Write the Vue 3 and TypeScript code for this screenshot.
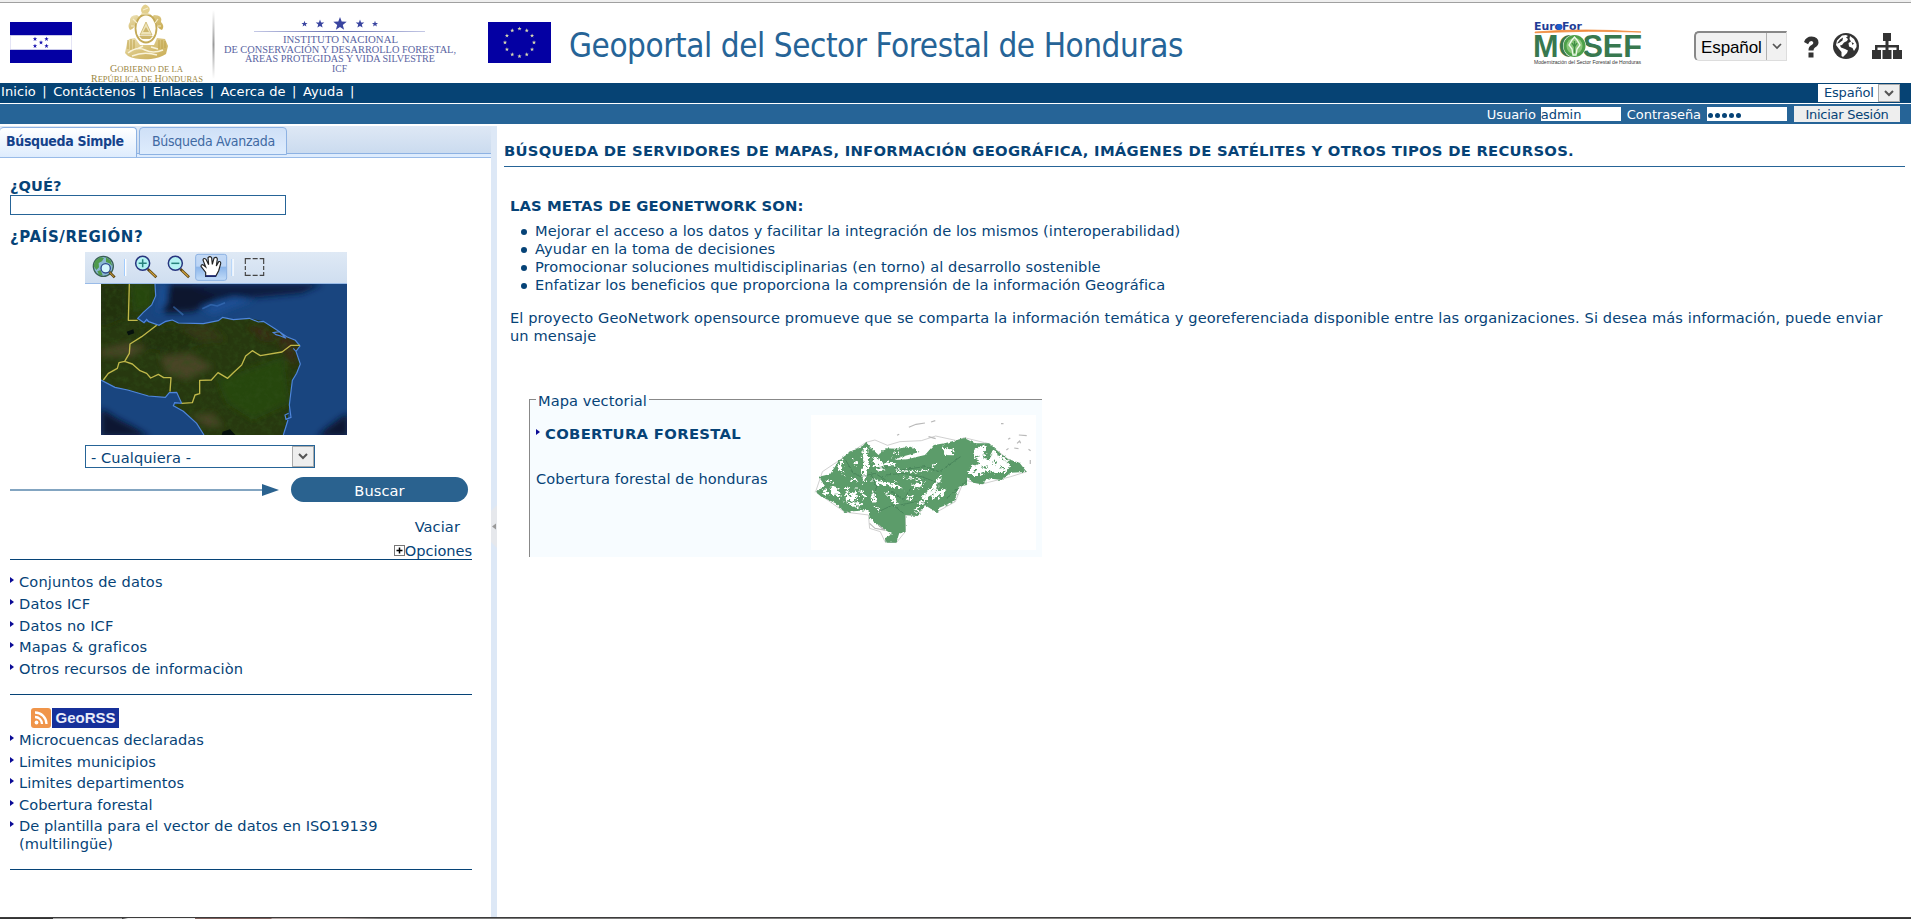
<script setup lang="ts">
const nav: string[] = ['Inicio', 'Contáctenos', 'Enlaces', 'Acerca de', 'Ayuda']
const categories: string[] = ['Conjuntos de datos', 'Datos ICF', 'Datos no ICF', 'Mapas & graficos', 'Otros recursos de informaciòn']
const feeds: string[] = [
  'Microcuencas declaradas',
  'Limites municipios',
  'Limites departimentos',
  'Cobertura forestal',
  'De plantilla para el vector de datos en ISO19139 (multilingüe)',
]
const goals: string[] = [
  'Mejorar el acceso a los datos y facilitar la integración de los mismos (interoperabilidad)',
  'Ayudar en la toma de decisiones',
  'Promocionar soluciones multidisciplinarias (en torno) al desarrollo sostenible',
  'Enfatizar los beneficios que proporciona la comprensión de la información Geográfica',
]

function star(cx: number, cy: number, r: number): string {
  const pts: string[] = []
  for (let i = 0; i < 10; i++) {
    const a = (Math.PI / 5) * i - Math.PI / 2
    const k = i % 2 ? r * 0.42 : r
    pts.push(`${(cx + k * Math.cos(a)).toFixed(1)},${(cy + k * Math.sin(a)).toFixed(1)}`)
  }
  return pts.join(' ')
}
const euStars: string[] = Array.from({ length: 12 }, (_, i) =>
  star(31.5 + 14.5 * Math.sin((i * Math.PI) / 6), 20.5 - 13.8 * Math.cos((i * Math.PI) / 6), 2.2),
)
const hnStars: string[] = [star(25, 17, 2.3), star(36.5, 17, 2.3), star(31, 20.5, 2.3), star(25, 24, 2.3), star(36.5, 24, 2.3)]
const icfStars: string[] = [star(304.5, 24, 3.2), star(320, 24, 4.5), star(340, 24, 7), star(360, 24, 4.5), star(375, 24, 3.2)]
</script>

<template>
  <div class="page">
    <header class="banner">
      <svg class="flag" width="62" height="41" viewBox="0 0 62 41">
        <rect width="62" height="41" fill="#0400a3" />
        <rect y="13" width="62" height="15" fill="#c9c9ea" />
        <rect x="0.5" y="14" width="61" height="13" fill="#fff" />
        <polygon v-for="(s, i) in hnStars" :key="i" :points="s" fill="#1a14b0" />
      </svg>
      <svg class="institute" width="400" height="83" viewBox="72 0 400 83">
        <defs>
          <linearGradient id="gold" x1="0" y1="0" x2="1" y2="1">
            <stop offset="0" stop-color="#eee3b8" />
            <stop offset="0.5" stop-color="#d8c27a" />
            <stop offset="1" stop-color="#c8ab52" />
          </linearGradient>
          <linearGradient id="rule" x1="0" y1="0" x2="0" y2="1">
            <stop offset="0" stop-color="#fff" />
            <stop offset="0.5" stop-color="#999" />
            <stop offset="1" stop-color="#fff" />
          </linearGradient>
          <linearGradient id="thin" x1="0" y1="0" x2="1" y2="0">
            <stop offset="0" stop-color="#c5c9e6" />
            <stop offset="0.5" stop-color="#5f69ac" />
            <stop offset="1" stop-color="#c5c9e6" />
          </linearGradient>
        </defs>
        <!-- coat of arms -->
        <g transform="translate(120 1)">
          <path d="M22 6 Q25 1 29 6 Q31 9 28 12 L30 15 H20 L22 12 Q20 9 22 6Z" fill="#e3d08e" />
          <path d="M17 14 Q9 14 10 21 Q7 25 10 29 Q15 27 15 23 L21 17Z M34 14 Q43 14 41 21 Q45 25 42 29 Q37 27 37 23 L31 17Z" fill="url(#gold)" />
          <path d="M9 38 L15 37 L20 44 L34 44 L37 37 L45 38 L48 45 L46 53 Q40 57 31 58 Q16 59 8 55 L5 52 L7 42Z" fill="url(#gold)" />
          <ellipse cx="26" cy="27.500" rx="10.500" ry="14" fill="#fffefa" stroke="#c4aa57" stroke-width="1.800" />
          <path d="M26 21 L32 34 H20Z" fill="#eee3b6" stroke="#c9b267" stroke-width="0.8" />
          <path d="M26 26 L29 31 H23Z M19 35 H33 L30 38 H22Z" fill="#cdb66c" />
          <path d="M8 39 V48 M11 38 V49 M14 39 V49 M39 39 V48 M42 39 V48 M45 40 V47" stroke="#bfa34b" stroke-width="1" />
          <path d="M8 52 Q17 45 25 49 T43 49 M12 55 Q24 50 37 54 M17 48 L23 45 M31 46 L38 48" fill="none" stroke="#f9f3da" stroke-width="1.500" />
          <path d="M13 18 L17 22 M38 18 L35 22 M11 25 H14 M38 25 H41 M23 9 L28 7 M21 13 H30" stroke="#f6eecb" stroke-width="1.200" />
        </g>
        <text class="gov" x="110" y="72" textLength="73" lengthAdjust="spacingAndGlyphs"><tspan class="cap">G</tspan>OBIERNO DE LA</text>
        <text class="gov" x="91" y="81.500" textLength="112" lengthAdjust="spacingAndGlyphs"><tspan class="cap">R</tspan>EPÚBLICA DE <tspan class="cap">H</tspan>ONDURAS</text>
        <rect x="212.500" y="10" width="2" height="69" fill="url(#rule)" />
        <polygon v-for="(s, i) in icfStars" :key="i" :points="s" fill="#3a45a0" />
        <rect x="254" y="31" width="171" height="1" fill="url(#thin)" />
        <text class="icf" x="283" y="43" textLength="115" lengthAdjust="spacingAndGlyphs">INSTITUTO NACIONAL</text>
        <text class="icf" x="224" y="52.500" textLength="232" lengthAdjust="spacingAndGlyphs">DE CONSERVACIÓN Y DESARROLLO FORESTAL,</text>
        <text class="icf" x="245" y="62" textLength="190" lengthAdjust="spacingAndGlyphs">ÁREAS PROTEGIDAS Y VIDA SILVESTRE</text>
        <text class="icf" x="332" y="71.500" textLength="15" lengthAdjust="spacingAndGlyphs">ICF</text>
      </svg>
      <svg class="eu" width="63" height="41" viewBox="0 0 63 41">
        <rect width="63" height="41" fill="#0400a3" />
        <polygon v-for="(s, i) in euStars" :key="i" :points="s" fill="#d9d9b0" />
      </svg>
      <h1>Geoportal del Sector Forestal de Honduras</h1>
      <div class="tools">
        <svg class="mosef" width="108" height="43" viewBox="0 0 108 43">
          <text x="0" y="8" class="euro" textLength="48" lengthAdjust="spacingAndGlyphs">EuroFor</text>
          <circle cx="25.500" cy="5" r="3" fill="#1c5fd0" />
          <path d="M1 10 Q50 6 107 10 Q55 8 1 10.800Z" fill="#f08a3c" stroke="#f08a3c" stroke-width="0.8" />
          <text x="-1" y="35" class="mo" textLength="109" lengthAdjust="spacingAndGlyphs">MOSEF</text>
          <circle cx="40.500" cy="24" r="11.500" fill="#fff" />
          <circle cx="40.500" cy="24" r="11" fill="#4ea04a" />
          <circle cx="40.500" cy="24" r="8" fill="#8cc77c" />
          <path d="M38 18 L40.500 15 L43 18 L46 23 L43 27 L42 33 H39 L38 27 L35 23Z" fill="none" stroke="#f0faee" stroke-width="1.300" />
          <path d="M40.500 19 V31 M38 21 L40.500 25 L43 21" stroke="#3f8f45" stroke-width="1.400" fill="none" />
          <text x="0" y="42" class="mini" textLength="107" lengthAdjust="spacingAndGlyphs">Modernización del Sector Forestal de Honduras</text>
        </svg>
        <div class="lang-big"><span>Español</span><i><svg width="10" height="7" viewBox="0 0 10 7"><path d="M1 1 L5 5 L9 1" fill="none" stroke="#555" stroke-width="1.700" /></svg></i></div>
        <svg class="question" width="16" height="22" viewBox="0 0 16 22"><path d="M1 6 Q3 0.500 8.500 0.500 Q15.500 1 15.500 6.500 Q15.500 9.500 12 11.500 Q10.500 12.500 10.500 14.500 H5.500 Q5.300 10.500 9 8.800 Q10.500 8 10.300 6.600 Q10 5 8.200 5 Q6.300 5 5.100 8.300Z M5.500 16.500 H10.500 V21.500 H5.500Z" fill="#333" /></svg>
        <svg class="globe" width="26" height="26" viewBox="0 0 26 26">
          <circle cx="13" cy="13" r="13" fill="#333" />
          <path d="M9 2.500 L13 2 L15 3 L13 4.500 L15 6 L14 8 L11 9.500 L9 12 L7 12.500 L8 14.500 L12 16 L15 17.500 L14 20 L12 22 L10 24 L8.500 23 L8.500 19 L6 16 L3 12 L4 7.500Z" fill="#fff" />
          <path d="M17 3 L21 6 L23.500 11 L23.500 14 L21 18 L19.500 15 L16 13.500 L15.500 10 L18 8.500 L16.500 6Z" fill="#fff" />
          <path d="M7 6.500 L10 4.500 L9.500 7.500 L6 10 L4 10.500Z M18.500 9 L21 10.500 L19.500 12Z" fill="#333" />
        </svg>
        <svg class="sitemap" width="30" height="26" viewBox="0 0 30 26"><path d="M11 0 H19 V8 H16.500 V12 H27 V17 H30 V26 H21 V17 H24.500 V14.500 H16.500 V17 H19.500 V26 H10.500 V17 H13.500 V14.500 H5.500 V17 H9 V26 H0 V17 H3 V12 H13.500 V8 H11Z" fill="#333" /></svg>
      </div>
    </header>

    <nav class="navbar">
      <div class="links"><template v-for="n in nav" :key="n"><a>{{ n }}</a><span class="sep">|</span></template></div>
      <div class="lang-small"><span>Español</span><i><svg width="10" height="7" viewBox="0 0 10 7"><path d="M1 1 L5 5 L9 1" fill="none" stroke="#555" stroke-width="2" /></svg></i></div>
    </nav>
    <div class="login">
      <span>Usuario</span><div class="field user">admin</div>
      <span>Contraseña</span><div class="field pass"><b v-for="n in 5" :key="n"></b></div>
      <button>Iniciar Sesión</button>
    </div>

    <div class="main">
      <aside>
        <div class="tabs">
          <div class="tab active">Búsqueda Simple</div>
          <div class="tab">Búsqueda Avanzada</div>
        </div>
        <div class="panel">
          <label class="what">¿QUÉ?</label>
          <div class="what-input"></div>
          <label class="where">¿PAÍS/REGIÓN?</label>
          <div class="mapbox">
            <svg class="toolbar" width="262" height="32" viewBox="255 276 786 96">
              <defs>
                <linearGradient id="bar" x1="0" y1="0" x2="0" y2="1"><stop offset="0" stop-color="#dfe9f5" /><stop offset="1" stop-color="#cfdef0" /></linearGradient>
                <linearGradient id="press" x1="0" y1="0" x2="0" y2="1"><stop offset="0" stop-color="#c3d9f5" /><stop offset="0.450" stop-color="#bcd5f5" /><stop offset="0.500" stop-color="#8db6ea" /><stop offset="1" stop-color="#c2dcf8" /></linearGradient>
              </defs>
              <rect x="255" y="276" width="786" height="93" fill="url(#bar)" />
              <rect x="255" y="369" width="786" height="3" fill="#99bbe8" />
              <circle cx="310" cy="319" r="30" fill="#8ab8d4" stroke="#3a5f55" stroke-width="4" />
              <path d="M285 303 L300 292 L312 294 L306 304 L296 309 L297 322 L289 330 L281 318Z M318 292 L332 302 L337 318 L328 310 L318 306Z M292 334 L302 330 L308 346 L297 345Z" fill="#4f9a4c" />
              <path d="M327 335 L344 352" stroke="#5c4514" stroke-width="8" /><path d="M328 336 L342 350" stroke="#d9a93c" stroke-width="3" />
              <circle cx="317" cy="325" r="14" fill="#d3f6fc" stroke="#2c4a8c" stroke-width="4" />
              <path d="M374 297 V348 M696 297 V348" stroke="#98c8ff" stroke-width="3" /><path d="M377 297 V348 M699 297 V348" stroke="#fff" stroke-width="4" />
              <g v-for="x in [428, 526]" :key="x">
                <path :d="`M${x + 15} 327 L${x + 41} 352`" stroke="#5c4514" stroke-width="8" /><path :d="`M${x + 20} 332 L${x + 39} 350`" stroke="#d9a93c" stroke-width="3.500" />
                <circle :cx="x" cy="310" r="21" fill="#b4f2f2" stroke="#27357f" stroke-width="4.500" />
                <path :d="x === 428 ? `M416 310 H440 M428 298 V322` : `M514 310 H538`" stroke="#26827c" stroke-width="4.500" />
              </g>
              <rect x="587" y="283" width="93" height="78" rx="7" fill="url(#press)" stroke="#8db2e3" stroke-width="3" />
              <path d="M617 349 V337 L603 319 Q604 311 611 316 L617 321 L609 300 Q611 292 618 298 L626 314 L624 293 Q631 286 635 294 L637 313 L642 294 Q650 289 652 297 L649 318 L656 305 Q663 303 662 311 L656 332 L647 349Z" fill="#fff" stroke="#222" stroke-width="3.500" />
              <path d="M617 348 H648" stroke="#1c2a78" stroke-width="5" />
              <path d="M736 312 V296 H752 M758 296 H773 M779 296 H791 V312 M791 318 V330 M791 336 V346 H779 M773 346 H758 M752 346 H736 V336 M736 330 V318" fill="none" stroke="#444" stroke-width="3.500" />
            </svg>
            <svg class="earth" width="246" height="151" viewBox="303 372 738 453" preserveAspectRatio="none">
              <defs>
                <filter id="soft"><feGaussianBlur stdDeviation="9" /></filter>
                <filter id="grain" x="0" y="0" width="1" height="1"><feTurbulence type="fractalNoise" baseFrequency="0.060" numOctaves="4" seed="7" /><feColorMatrix values="0 0 0 0 0.030  0 0 0 0 0.080  0 0 0 0 0.010  2.200 0 0 0 -0.900" /></filter>
                <clipPath id="landclip"><path d="M303 372 H465 L467 408 L455 435 L430 457 L413 475 L432 488 L446 485 L477 496 L517 480 L535 489 L610 491 L655 482 L668 472 L700 479 L748 475 L790 484 L825 506 L860 530 L886 541 L900 558 L888 574 L901 612 L890 640 L877 661 L868 735 L864 770 L850 825 H612 L590 790 L550 754 L520 734 L545 730 L530 697 L508 698 L496 712 L445 708 L383 690 L345 682 L303 660Z" /></clipPath>
              </defs>
              <rect x="303" y="372" width="738" height="453" fill="#19457f" />
              <g filter="url(#soft)">
                <path d="M505 372 H820 L760 405 L650 420 L580 455 L500 460 L475 440Z" fill="#07132f" />
                <path d="M560 372 H970 L905 400 L750 415 L650 408Z" fill="#081b41" />
                <path d="M480 372 H505 L500 430 L470 465Z M600 440 L700 410 L760 420 L640 465Z" fill="#1c4f94" />
                <path d="M303 745 L350 775 L400 800 L450 830 H303Z M950 830 L985 800 L1020 775 L1045 760 V830Z" fill="#071430" />
              </g>
              <path d="M607 446 L633 434 L652 438 L675 428 M520 440 L550 465" fill="none" stroke="#3d75c0" stroke-width="5" opacity="0.600" />
              <g clip-path="url(#landclip)">
                <rect x="303" y="372" width="620" height="453" fill="#27380f" />
                <g filter="url(#soft)">
                  <path d="M303 568 L380 548 L440 560 L400 590 L303 590Z M480 590 L570 580 L640 620 L560 660 L500 640Z M570 765 L640 760 L670 800 L620 800Z" fill="#4a4427" />
                  <path d="M520 500 L620 490 L680 540 L560 550Z" fill="#343813" />
                  <path d="M650 660 L850 590 L870 730 L760 780 L680 730Z M390 372 H460 V440 L400 460Z" fill="#26470f" />
                  <path d="M820 510 L890 545 L885 620 L865 600Z M740 500 L790 500 L830 540 L790 540Z" fill="#3b2c13" />
                  <path d="M420 510 L530 500 L610 550 L520 580 L430 560Z M303 380 L375 375 L380 470 L303 500Z" fill="#20310e" />
                </g>
                <rect x="303" y="372" width="738" height="453" filter="url(#grain)" opacity="0.500" />
                <path d="M380 515 L400 508 L403 520 L385 526Z M668 815 L690 808 L706 825 H665Z" fill="#06110d" />
              </g>
              <path d="M465 372 L467 408 L455 435 L430 457 L413 475 L432 488 L440 478 L446 485 L477 496 L497 484 L517 480 L535 489 L610 491 L655 482 L668 472 L700 479 L748 475 L775 486 L790 484 L825 506 L860 530 L886 541 L900 558 L888 574 L880 565 M888 574 L901 612 L890 640 L877 661 L868 735 L873 772 L858 778 L855 765 L866 760 M864 780 L850 825 M820 518 L838 515 L858 535 L842 528 L828 524Z M612 825 L590 790 L550 754 L520 737 L524 728 L545 730 L530 697 L508 698 L496 712 L445 708 L383 690 L345 682 L303 660" fill="none" stroke="#4f86dc" stroke-width="3.500" />
              <path d="M388 372 L385 481 H413 M470 496 L425 530 L390 552 L388 580 L374 604 L357 608 L352 625 L325 640 L310 660 M374 604 L397 612 L420 632 L440 640 L452 654 L475 643 L491 653 L513 653 L510 695 M545 730 L577 728 L585 705 L599 701 V661 L634 660 L654 638 L683 655 L700 638 L725 615 L737 588 L757 572 L781 587 L846 576 L873 556 H900" fill="none" stroke="#c0b84a" stroke-width="4" stroke-linejoin="round" />
            </svg>
          </div>
          <div class="region"><span>- Cualquiera -</span><i><svg width="10" height="7" viewBox="0 0 10 7"><path d="M1 1 L5 5 L9 1" fill="none" stroke="#555" stroke-width="2" /></svg></i></div>
          <div class="search-row">
            <svg width="269" height="12" viewBox="0 0 269 12"><path d="M0 6 H252" stroke="#5a87ad" stroke-width="1.500" /><path d="M252 0 L269 6 L252 12Z" fill="#2a628f" /></svg>
            <button class="search">Buscar</button>
          </div>
          <div class="clear">Vaciar</div>
          <div class="options"><svg width="11" height="11" viewBox="0 0 11 11"><rect x="0.500" y="0.500" width="10" height="10" fill="#fff" stroke="#777" /><path d="M2.500 5.500 H8.500 M5.500 2.500 V8.500" stroke="#000" stroke-width="1.500" /></svg><span>Opciones</span></div>
          <ul class="list first"><li v-for="c in categories" :key="c">{{ c }}</li></ul>
          <hr />
          <div class="georss">
            <svg width="20" height="20" viewBox="0 0 20 20"><rect width="20" height="20" rx="3" fill="#f0954a" /><circle cx="5.500" cy="14.500" r="1.900" fill="#fff" /><path d="M4 9 A7 7 0 0 1 11 16 M4 4.500 A11.500 11.500 0 0 1 15.500 16" fill="none" stroke="#fff" stroke-width="2.300" /></svg><span>GeoRSS</span>
          </div>
          <ul class="list second"><li v-for="c in feeds" :key="c">{{ c }}</li></ul>
          <hr />
        </div>
      </aside>
      <div class="splitter"><svg width="6" height="43" viewBox="0 0 6 43"><path d="M6 0 L0 6 V37 L6 43Z" fill="#e6e8ec" /><path d="M5 18.500 L1 21.500 L5 24.500Z" fill="#999" /></svg></div>
      <main>
        <h2>BÚSQUEDA DE SERVIDORES DE MAPAS, INFORMACIÓN GEOGRÁFICA, IMÁGENES DE SATÉLITES Y OTROS TIPOS DE RECURSOS.</h2>
        <section>
          <h3>LAS METAS DE GEONETWORK SON:</h3>
          <ul class="goals"><li v-for="g in goals" :key="g">{{ g }}</li></ul>
          <p>El proyecto GeoNetwork opensource promueve que se comparta la información temática y georeferenciada disponible entre las organizaciones. Si desea más información, puede enviar un mensaje</p>
          <div class="feature">
            <div class="legend"><span>Mapa vectorial</span></div>
            <div class="feature-body">
              <div class="feature-text">
                <div class="feature-title">COBERTURA FORESTAL</div>
                <div>Cobertura forestal de honduras</div>
              </div>
              <svg class="thumb" width="225" height="135" viewBox="871 105 630 405" preserveAspectRatio="none">
                <defs>
                  <filter id="rough" x="-0.050" y="-0.050" width="1.100" height="1.100"><feTurbulence type="fractalNoise" baseFrequency="0.110" numOctaves="3" seed="4" result="n" /><feDisplacementMap in="SourceGraphic" in2="n" scale="26" xChannelSelector="R" yChannelSelector="G" /></filter>
                  <filter id="edge" x="-0.050" y="-0.050" width="1.100" height="1.100"><feTurbulence type="fractalNoise" baseFrequency="0.150" numOctaves="2" seed="9" result="n" /><feDisplacementMap in="SourceGraphic" in2="n" scale="9" xChannelSelector="R" yChannelSelector="G" /></filter>
                </defs>
                <rect x="871" y="105" width="630" height="405" fill="#fff" />
                <path d="M1025 187 L1050 180 L1085 196 L1120 185 L1180 182 L1220 168 L1280 182 L1300 173 L1365 190 L1420 235 L1475 275 L1430 290 L1350 312 L1300 300 L1275 365 L1225 395 L1190 375 L1170 407 L1135 405 L1135 455 L1110 488 L1078 485 L1065 455 L1035 445 L1032 405 L965 396 L884 335 L903 275Z" fill="#fff" stroke="#bbb" stroke-width="2" />
                <path filter="url(#edge)" d="M950 240 L985 213 L1016 197 L1025 187 L1040 205 L1060 225 L1080 205 L1110 206 L1150 200 L1175 216 L1125 230 L1105 240 L1140 238 L1190 225 L1215 195 L1245 190 L1280 180 L1300 174 L1330 190 L1370 190 L1390 210 L1420 236 L1455 248 L1475 276 L1430 278 L1405 300 L1365 295 L1350 313 L1325 308 L1308 292 L1308 315 L1285 320 L1272 365 L1230 383 L1227 400 L1190 375 L1170 408 L1135 405 L1136 455 L1118 460 L1110 488 L1080 488 L1078 475 L1098 462 L1075 448 L1050 430 L1035 410 L1032 390 L965 396 L940 370 L900 350 L884 336 L910 318 L893 290 L925 282Z" fill="#5c9c6b" />
                <g fill="#fff" filter="url(#rough)">
                  <path d="M1015 210 L1028 205 L1032 255 L1022 310 L1012 300 L1018 250Z" />
                  <path d="M950 245 L962 237 L958 266 L968 285 L947 270Z" />
                  <path d="M925 315 L943 320 L955 350 L930 345Z M970 315 L982 350 L998 325 L1000 360 L965 365Z M1005 325 L1025 345 L1018 360Z M1040 330 L1052 340 L1056 370 L1042 365Z M905 325 L918 340 L908 345Z" />
                  <path d="M970 370 L1005 366 L1015 378 L990 380Z M1075 335 L1105 350 L1118 370 L1108 375 L1090 352Z" />
                  <path d="M1238 285 L1232 310 L1200 350 L1175 385 L1160 402 L1178 362 L1210 315Z" />
                  <path d="M1242 210 L1250 200 L1270 210 L1268 226 L1245 225Z M1210 340 L1225 325 L1250 332 L1235 350 L1212 357Z" />
                  <path d="M1325 215 L1350 193 L1362 205 L1352 235 L1368 240 L1382 213 L1410 235 L1430 255 L1420 275 L1395 280 L1370 270 L1345 285 L1308 285 L1320 260 L1340 250Z" />
                  <path d="M1045 298 L1110 312 L1130 328 L1090 318 L1048 310Z M1040 240 L1060 232 L1070 246 L1110 250 L1105 256 L1050 258Z M1150 315 L1190 307 L1170 326 L1160 323Z M1140 350 L1158 345 L1148 362Z" />
                  <path d="M990 235 L1003 245 L995 265Z M1055 260 L1080 268 L1060 276Z M1060 195 L1070 200 L1056 218Z M983 292 L1006 303 L990 306Z" />
                  <path d="M1105 270 L1165 276 L1205 268 M1130 292 L1180 298 M1050 380 L1062 395 M1100 225 L1120 215 M1210 262 L1222 252 M910 300 L930 306" fill="none" stroke="#fff" stroke-width="4" />
                </g>
                <g fill="#5c9c6b" filter="url(#rough)"><path d="M1352 262 L1362 255 L1366 268Z M1380 238 L1392 245 L1386 256Z M1400 262 L1412 258 L1414 268Z M1334 228 L1344 222 L1340 240Z M1326 270 L1336 274 L1328 279Z" /></g>
                <path filter="url(#edge)" d="M965 235 L990 280 L1010 290 L1050 280 L1080 300 M1060 265 L1100 258 L1120 270 L1190 260 L1230 275 L1270 245 L1290 230 M1080 285 L1130 280 L1180 290 L1230 310 M1120 375 L1165 365 L1195 370 M1060 395 L1100 375 L1130 400 M1090 330 L1130 360 L1150 325 M1040 285 L1055 320 L1045 360 M1250 355 L1280 330 L1310 300" fill="none" stroke="#3c7550" stroke-width="2" opacity="0.800" />
                <path d="M1035 430 L1050 445 L1075 450 L1060 435 M1145 142 L1165 133 L1190 129 M1207 126 L1219 122 M1112 166 L1118 163 M1403 131 H1410 M1423 178 L1429 174 M1453 165 L1475 167 M1448 190 L1455 183 L1458 190 M1440 204 L1452 206 M1480 208 L1486 212 M1485 240 V252 M1418 210 L1424 205 M1200 170 L1220 176" fill="none" stroke="#b9b9b9" stroke-width="3.500" />
              </svg>
            </div>
          </div>
        </section>
      </main>
    </div>
    <footer></footer>
  </div>
</template>

<style>
body { margin: 0; overflow: hidden; background: #fff; }
</style>
<style scoped>
.page { box-sizing: border-box; display: flex; flex-direction: column; width: 1911px; height: 919px; color: #064377; font: 14.6px/18px "DejaVu Sans", Verdana, sans-serif; letter-spacing: 0.09px; background: #fff; }
.page * { box-sizing: border-box; }
svg { display: block; flex: none; }
ul { list-style: none; margin: 0; padding: 0; }
button { border: 0; padding: 0; margin: 0; }
.banner { display: flex; align-items: flex-start; height: 83px; flex: none; border-top: 2px solid #efefef; box-shadow: inset 0 1px 0 #a0a0a0; }
.flag { margin: 20px 0 0 10px; }
.institute { margin-top: -2px; }
.gov { font: 9px "Liberation Serif", serif; fill: #9a8644; letter-spacing: 0; }
.cap { font-size: 10.5px; }
.icf { font: 9.3px "Liberation Serif", serif; fill: #5a64a2; letter-spacing: 0; }
.eu { margin: 20px 0 0 16px; }
h1 { margin: 24px 0 0 18px; font: 400 33px/40px "DejaVu Sans Condensed", "DejaVu Sans", sans-serif; letter-spacing: -0.44px; color: #266497; white-space: nowrap; }
.tools { display: flex; align-items: flex-start; margin-left: auto; padding-right: 9px; }
.mosef { margin: 20px 52px 0 0; letter-spacing: 0; overflow: visible; }
.euro { font: 700 10.5px "DejaVu Sans", sans-serif; fill: #1f3d96; }
.mo { font: 700 30.5px "Liberation Sans", sans-serif; fill: #38784f; }
.mini { font: 5px "Liberation Sans", sans-serif; fill: #333; }
.lang-big { display: flex; width: 93px; height: 30px; margin: 29px 16px 0 0; border: 2px solid #888; border-right: 1px solid #ddd; border-bottom: 1px solid #ddd; border-radius: 5px 0 0 5px; background: #f1f1f1; color: #000; font: 17px/30px "Liberation Sans", Arial, sans-serif; letter-spacing: -0.1px; }
.lang-big span { flex: 1; padding-left: 5px; }
.lang-big i { display: flex; width: 20px; align-items: center; justify-content: center; border: 1px solid #b0b0b0; border-width: 0 0 0 1px; }
.question { margin: 34px 14px 0 0; }
.globe { margin: 31px 13px 0 0; }
.sitemap { margin-top: 31px; }
.navbar { display: flex; justify-content: space-between; height: 20px; flex: none; padding-right: 11px; background: #064374; color: #fff; font-size: 13px; line-height: 18px; letter-spacing: 0.08px; }
.links { padding-left: 1px; white-space: nowrap; }
.sep { margin: 0 6.4px 0 6.4px; }
.lang-small { display: flex; width: 82px; height: 18px; margin-top: 1px; background: #fff; color: #064377; }
.lang-small span { flex: 1; padding-left: 6px; line-height: 17px; letter-spacing: -0.2px; }
.lang-small i { display: flex; width: 22px; align-items: center; justify-content: center; background: #eee; border: 1px solid #aaa; }
.login { display: flex; justify-content: flex-end; height: 22px; flex: none; padding: 3px 11px 0 0; border-top: 1px solid #fff; border-bottom: 1px solid #fff; background: #266497; color: #fff; font-size: 13px; line-height: 16px; letter-spacing: -0.05px; }
.field { width: 80px; height: 14px; background: #fff; color: #064377; line-height: 15px; }
.user { margin: 0 6px 0 5px; }
.pass { display: flex; align-items: center; gap: 2px; margin: 0 7px 0 6px; padding: 2px 0 0 1px; }
.pass b { width: 5px; height: 5px; border-radius: 50%; background: #064377; }
.login button { width: 106px; height: 16px; margin-top: -1px; background: #eee; color: #064377; font: 13px/17px "DejaVu Sans", sans-serif; letter-spacing: -0.25px; }
.main { display: flex; height: 792px; flex: none; margin-top: 1px; }
aside { width: 491px; flex: none; }
.tabs { display: flex; height: 32px; gap: 2px; padding-top: 1px; border-bottom: 1px solid #99bbe8; background: linear-gradient(#dee8f5, #cbdbef 27px, #8db2e3 27px, #8db2e3 28px, #deecfd 28px); font: 14px/27px "DejaVu Sans Condensed", sans-serif; letter-spacing: -0.28px; color: #416aa3; }
.tab { width: 148px; height: 28px; padding-left: 12px; border: 1px solid #8db2e3; border-radius: 4px 4px 0 0; background: linear-gradient(#cfe0f7, #deecfd); white-space: nowrap; }
.tab.active { width: 137px; height: 30px; padding-left: 6px; border-width: 1px 1px 0 0; background: linear-gradient(#fff, #deecfd); color: #15428b; font-weight: 700; letter-spacing: -0.34px; }
.panel { width: 472px; padding-left: 10px; }
label { display: block; font-weight: 700; }
.what { padding-top: 19px; height: 37px; letter-spacing: 0.1px; }
.what-input { width: 276px; height: 20px; border: 1px solid #266497; }
.where { height: 37px; padding-top: 13px; letter-spacing: 0.6px; font-size: 15px; }
.mapbox { width: 262px; margin-left: 75px; }
.earth { margin-left: 16px; }
.region { display: flex; width: 230px; height: 23px; margin: 10px 0 9px 75px; border: 1px solid #266497; line-height: 23px; }
.region span { flex: 1; padding-left: 5px; }
.region i { display: flex; width: 22px; align-items: center; justify-content: center; border: 1px solid #aaa; background: #eee; }
.search-row { display: flex; align-items: center; gap: 12px; height: 25px; }
.search { width: 177px; height: 25px; padding-top: 2px; border-radius: 13px; background: #2a628f; color: #fff; font: 14.6px/23px "DejaVu Sans", sans-serif; letter-spacing: 0.1px; }
.clear { margin: 16px 12px 6px 0; text-align: right; }
.options { display: flex; justify-content: flex-end; height: 18px; line-height: 17px; border-bottom: 1px solid #064377; letter-spacing: -0.05px; }
.options svg { margin: 3px 0 0 0; }
.list li { position: relative; padding: 0 0 3.75px 9px; letter-spacing: 0.14px; }
.second.list li { letter-spacing: 0.04px; padding-bottom: 3.6px; }
.list li::before, .feature-title::before { content: ""; position: absolute; left: 0; top: 4px; border-left: 4px solid #0a0a96; border-top: 3.5px solid transparent; border-bottom: 3.5px solid transparent; }
.first { padding-top: 13px; height: 134px; }
hr { height: 1px; margin: 0; border: 0; background: #064377; }
.georss { display: flex; gap: 1px; margin: 13px 0 3px 21px; }
.georss span { width: 67px; height: 20px; background: #16309a; color: #e8ebf8; font: 700 15px/20px "Liberation Sans", sans-serif; text-align: center; letter-spacing: 0; }
.second { height: 138px; }
.second li:last-child { width: 400px; }
.splitter { display: flex; align-items: center; width: 6px; height: 791px; padding-top: 9px; flex: none; background: #dde8f6; }
main { flex: 1; padding: 0 6px 0 7px; min-width: 0; }
h2 { height: 41px; margin: 0; padding: 16px 0 0 0; border-bottom: 1px solid #266497; font-size: 14.8px; line-height: 18px; letter-spacing: 0.25px; white-space: nowrap; }
section { padding: 30px 20px 0 6px; }
h3 { margin: 0 0 7px; font-size: 14.8px; line-height: 18px; letter-spacing: 0.08px; }
.goals li { position: relative; padding-left: 25px; height: 18px; letter-spacing: 0.06px; }
.goals li::before { content: ""; position: absolute; left: 11px; top: 7px; width: 6px; height: 6px; border-radius: 50%; background: #064377; }
p { margin: 15px 0 0; letter-spacing: 0.11px; }
.feature { width: 513px; height: 158px; margin: 54px 0 0 19px; border-left: 1px solid #888; background: linear-gradient(#888, #888) no-repeat 0 0 / 100% 1px, #f7fcff; }
.legend { height: 16px; padding-left: 6px; }
.legend span { position: relative; top: -7px; display: inline-block; padding: 0 2px 0 2px; background: linear-gradient(#fff 7px, #f7fcff 7px); }
.feature-body { display: flex; padding-left: 6px; }
.feature-text { width: 275px; padding-top: 10px; }
.feature-title { position: relative; height: 45px; padding-top: 0; padding-left: 9px; font-size: 14.8px; font-weight: 700; letter-spacing: 0.32px; }
footer { height: 2px; margin-top: -1px; flex: none; background: linear-gradient(#3c3c3c 1px, transparent 1px), linear-gradient(90deg, #333 53px, #aaa 53px, #aaa 122px, #333 122px, #eee 128px, #eee 195px, #80605c 195px, #80605c 271px, #b5a5a3 272px, #b5a5a3 340px, #777 380px, #8b8884 1400px, #777 1500px, #6b5c57 1500px, #6b6565 1760px, #333 1760px); }
</style>
